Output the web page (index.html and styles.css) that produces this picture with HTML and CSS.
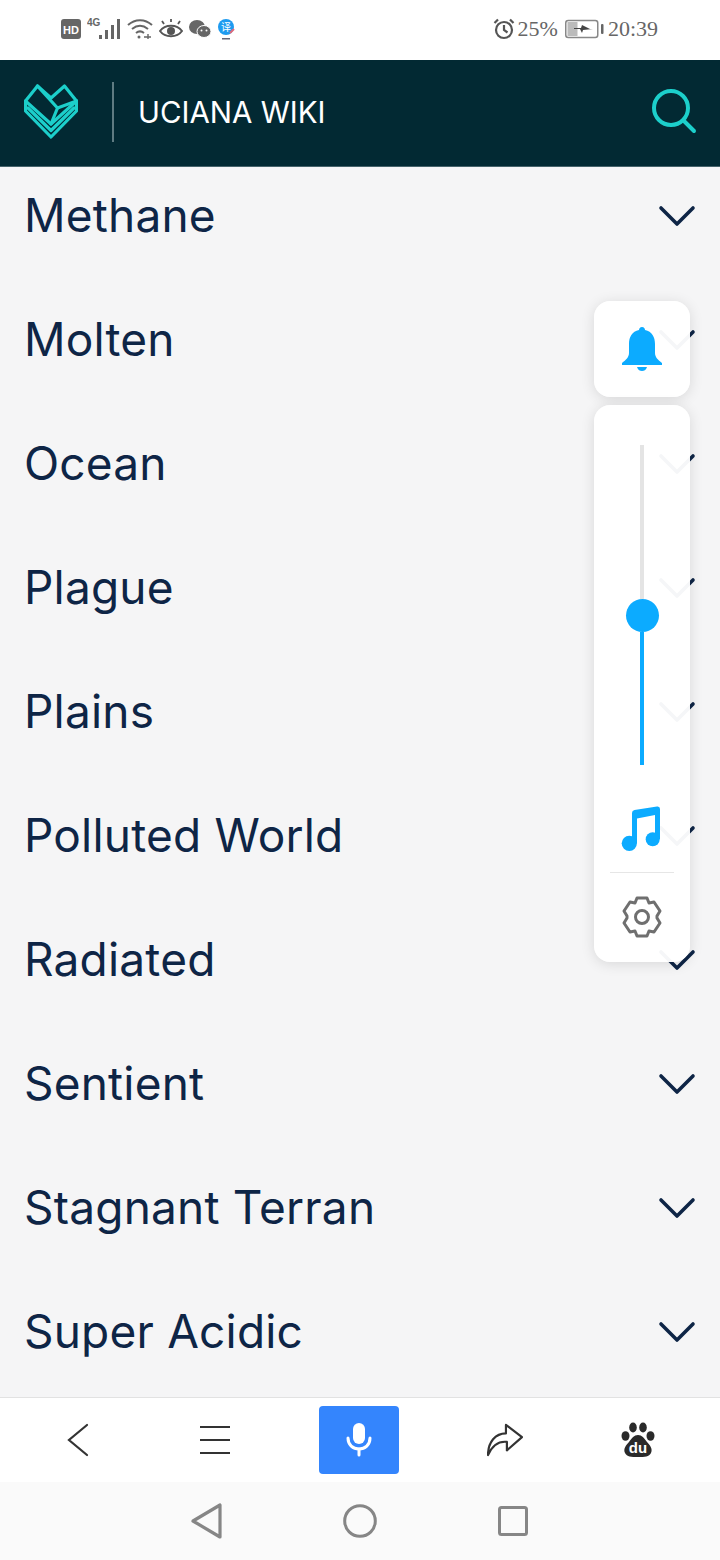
FILE: index.html
```html
<!DOCTYPE html>
<html lang="en">
<head>
<meta charset="utf-8">
<title>Uciana Wiki</title>
<link rel="stylesheet" href="styles.css">
</head>
<body>
<div class="phone">
  <div class="status">
    <div class="status-left">
      <svg class="st-icon" width="20" height="20" viewBox="0 0 20 20"><rect width="20" height="20" rx="3" fill="#666"/><text x="10" y="14.500" class="hd">HD</text></svg>
      <svg class="st-icon" width="34" height="24" viewBox="0 0 34 24"><text x="0" y="9" class="g4">4G</text><g fill="#666"><rect x="12" y="18" width="3" height="4"/><rect x="18" y="13" width="3" height="9"/><rect x="24" y="8" width="3" height="14"/><rect x="30" y="2" width="3" height="20"/></g></svg>
      <svg class="st-icon" width="26" height="22" viewBox="0 0 26 22" fill="none" stroke="#666" stroke-width="2"><path d="M1 7c7-6.500 17-6.500 24 0"/><path d="M5 11c5-4 11-4 16 0"/><path d="M9 15c2.500-2 5.500-2 8 0"/><circle cx="12" cy="19" r="1.500" fill="#666" stroke="none"/><path d="M17 19h7M21 16v5" stroke-width="1.400"/></svg>
      <svg class="st-icon" width="24" height="22" viewBox="0 0 24 22" fill="none" stroke="#555" stroke-width="2"><path d="M1 13c5-7 17-7 22 0-5 7-17 7-22 0z"/><circle cx="12" cy="13" r="4" fill="#555" stroke="none"/><path d="M5 6 3 3M12 4V1M19 6l2-3" stroke-width="1.800"/></svg>
      <svg class="st-icon" width="22" height="20" viewBox="0 0 22 20"><ellipse cx="8" cy="8" rx="8" ry="7" fill="#666"/><ellipse cx="15" cy="12.500" rx="7" ry="6" fill="#666" stroke="#fff"/><circle cx="12.500" cy="11.500" r="1" fill="#fff"/><circle cx="17.500" cy="11.500" r="1" fill="#fff"/></svg>
      <svg class="st-icon" width="18" height="22" viewBox="0 0 18 22"><circle cx="9" cy="9" r="8" fill="#1e9bf0"/><path d="M13 15l4-4" stroke="#e06a7a" stroke-width="2"/><rect x="5" y="20" width="8" height="1.500" fill="#667"/><text x="9" y="12.500" class="yi">译</text></svg>
    </div>
    <div class="status-right">
      <svg class="alarm" width="22" height="22" viewBox="0 0 22 22" fill="none" stroke="#555" stroke-width="2.200"><circle cx="11" cy="12" r="8"/><path d="M11 7v5l3.500 2.500"/><path d="M1.500 5 5 1.500M20.500 5 17 1.500"/></svg>
      <span class="st-text">25%</span>
      <svg class="battery" width="39" height="20" viewBox="0 0 39 20"><rect x="0.750" y="1.500" width="32" height="17" rx="2.500" fill="none" stroke="#888" stroke-width="1.500"/><rect x="2.500" y="3" width="10" height="14" fill="#bbb"/><path d="M9 9h7l1-3 8 4h3l-10 1-1 3-2-4H9z" fill="#444"/><rect x="36" y="5" width="2.500" height="10" rx="1" fill="#666"/></svg>
      <span class="st-text">20:39</span>
    </div>
  </div>

  <header class="header">
    <svg class="logo" width="54" height="56" viewBox="0 0 54 56" fill="none" stroke="#1ccfcb" stroke-width="3.200" stroke-linejoin="round" stroke-linecap="round"><path d="M1.500 17 13.500 2 27 14 40.500 2 52.500 17v10L27 53 1.500 27z"/><path d="M1.500 17 27 40 52.500 17"/><path d="M13.500 2l20 22L27 40"/><path d="M33.500 24l19-7"/><path d="M4 24l23 22.500L50 24"/></svg>
    <span class="divider"></span>
    <span class="brand">UCIANA WIKI</span>
    <svg class="search" width="46" height="46" viewBox="0 0 46 46" fill="none" stroke="#1ccfcb" stroke-width="4" stroke-linecap="round"><circle cx="20" cy="19" r="17"/><path d="M33 32l10 10"/></svg>
  </header>

  <main class="list">
    <div class="row"><span class="label">Methane</span><svg class="chev" viewBox="0 0 38 22"><path d="M3 3l16 16L35 3"/></svg></div>
    <div class="row"><span class="label">Molten</span><svg class="chev" viewBox="0 0 38 22"><path d="M3 3l16 16L35 3"/></svg></div>
    <div class="row"><span class="label">Ocean</span><svg class="chev" viewBox="0 0 38 22"><path d="M3 3l16 16L35 3"/></svg></div>
    <div class="row"><span class="label">Plague</span><svg class="chev" viewBox="0 0 38 22"><path d="M3 3l16 16L35 3"/></svg></div>
    <div class="row"><span class="label">Plains</span><svg class="chev" viewBox="0 0 38 22"><path d="M3 3l16 16L35 3"/></svg></div>
    <div class="row"><span class="label">Polluted World</span><svg class="chev" viewBox="0 0 38 22"><path d="M3 3l16 16L35 3"/></svg></div>
    <div class="row"><span class="label">Radiated</span><svg class="chev" viewBox="0 0 38 22"><path d="M3 3l16 16L35 3"/></svg></div>
    <div class="row"><span class="label">Sentient</span><svg class="chev" viewBox="0 0 38 22"><path d="M3 3l16 16L35 3"/></svg></div>
    <div class="row"><span class="label">Stagnant Terran</span><svg class="chev" viewBox="0 0 38 22"><path d="M3 3l16 16L35 3"/></svg></div>
    <div class="row"><span class="label">Super Acidic</span><svg class="chev" viewBox="0 0 38 22"><path d="M3 3l16 16L35 3"/></svg></div>
  </main>

  <aside class="float">
    <div class="card bell-card">
      <svg width="40" height="46" viewBox="0 0 40 46" fill="#0cabff"><path d="M20 0c2 0 3 1.500 3 3 7 1.500 10 7 10 14v9c0 4 3 7 7 10v2H0v-2c4-3 7-6 7-10v-9C7 10 10 4.500 17 3c0-1.500 1-3 3-3z"/><path d="M15 40h10c-1 3-3 4-5 4s-4-1-5-4z"/></svg>
    </div>
    <div class="card slider-card">
      <div class="track">
        <div class="track-off"></div>
        <div class="thumb"></div>
        <div class="track-on"></div>
      </div>
      <svg class="music" width="44" height="48" viewBox="0 0 44 48" fill="#0cabff"><path d="M12 8q0-2.500 2.500-3L37 1.500q3-.5 3 2.500v30h-5V10l-18 3.500V38h-5z"/><circle cx="9.300" cy="38.300" r="7.600"/><circle cx="32.700" cy="34.300" r="7"/></svg>
      <div class="sep"></div>
      <svg class="gear" width="40" height="42" viewBox="0 0 40 42" fill="none" stroke="#6f6f6f" stroke-width="3" stroke-linejoin="round"><path d="M15 2h10l2 5 5-1 6 9-3 5v2l3 5-6 9-5-1-2 5H15l-2-5-5 1-6-9 3-5v-2l-3-5 6-9 5 1z"/><circle cx="20" cy="21" r="6.500"/></svg>
    </div>
  </aside>

  <nav class="toolbar">
    <svg width="22" height="34" viewBox="0 0 22 34" fill="none" stroke="#333" stroke-width="2.200" stroke-linecap="round"><path d="M20 2 2 17l18 15"/></svg>
    <svg width="32" height="30" viewBox="0 0 32 30" stroke="#333" stroke-width="2.200"><path d="M1 2h30M1 15h30M1 28h30"/></svg>
    <div class="mic-btn">
      <svg width="26" height="34" viewBox="0 0 26 34" fill="none"><rect x="7" y="0" width="12" height="21" rx="6" fill="#fff"/><path d="M2 15c0 7 5 11 11 11s11-4 11-11" stroke="#fff" stroke-width="3" stroke-linecap="round"/><path d="M13 26v6" stroke="#fff" stroke-width="3" stroke-linecap="round"/></svg>
    </div>
    <svg width="36" height="34" viewBox="0 0 38 36" fill="none" stroke="#333" stroke-width="2.300" stroke-linejoin="round"><path d="M1 34C1 20 9 11 20 11V2l17 13-16 14v-9C12 19 5 25 1 34z"/></svg>
    <svg width="34" height="36" viewBox="0 0 34 36"><g fill="#2a2a2a"><ellipse cx="4.500" cy="14" rx="4" ry="4.800"/><ellipse cx="12" cy="5.500" rx="3.800" ry="5"/><ellipse cx="22" cy="5.500" rx="3.800" ry="5"/><ellipse cx="29.500" cy="14" rx="4" ry="4.800"/><path d="M17 13c4 0 6 3 9 7 3 3 6 7 4 11-2 4-6 4-13 4s-11 0-13-4c-2-4 1-8 4-11 3-4 5-7 9-7z"/></g><text x="17" y="31" class="du">du</text></svg>
  </nav>

  <div class="sysnav">
    <svg width="32" height="36" viewBox="0 0 32 36" fill="none" stroke="#868686" stroke-width="3.200" stroke-linejoin="round"><path d="M29 2v32L2 18z"/></svg>
    <svg width="34" height="34" viewBox="0 0 34 34" fill="none" stroke="#868686" stroke-width="3"><circle cx="17" cy="17" r="15.300"/></svg>
    <svg class="sn-square" width="30" height="30" viewBox="0 0 30 30" fill="none" stroke="#868686" stroke-width="3"><rect x="1.500" y="1.500" width="27" height="27" rx="2"/></svg>
  </div>
</div>
</body>
</html>
```
FILE: styles.css
```css
* { box-sizing: border-box; }
html, body { margin: 0; padding: 0; }
body { background: #f5f5f6; font-family: "Inter", "Roboto", sans-serif; }

.phone {
  position: relative;
  width: 720px;
  height: 1560px;
  display: flex;
  flex-direction: column;
  overflow: hidden;
}

.status {
  height: 60px;
  flex: none;
  background: #fff;
  display: flex;
  align-items: center;
  justify-content: space-between;
  padding: 0 62px 2px 61px;
}
.status-left { display: flex; align-items: center; gap: 6px; }
.status-right { display: flex; align-items: center; }
.alarm { margin-right: 3px; }
.battery { margin: 0 4px 0 7px; }
.st-text { font-family: "Liberation Serif", serif; font-size: 22px; color: #666; }
.hd { font-family: "Liberation Sans", sans-serif; font-weight: 700; font-size: 11px; fill: #fff; text-anchor: middle; }
.g4 { font-family: "Liberation Sans", sans-serif; font-weight: 700; font-size: 10px; fill: #666; }
.yi { font-family: "Noto Sans CJK SC", sans-serif; font-size: 10px; fill: #fff; text-anchor: middle; }
.du { font-family: "Liberation Sans", sans-serif; font-weight: 700; font-size: 15px; fill: #fff; text-anchor: middle; }

.header {
  height: 107px;
  flex: none;
  background: #022933;
  display: flex;
  align-items: center;
  padding: 0 24px 2px;
  border-bottom: 1px solid #46636b;
}
.logo { flex: none; }
.divider { width: 2px; height: 60px; background: #5f7b82; margin: 0 24px 0 34px; flex: none; }
.brand { color: #fff; font-size: 29.500px; padding-bottom: 1px; flex: 1; white-space: nowrap; }
.search { flex: none; margin-right: -1px; }

.list {
  flex: 1;
  min-height: 0;
  overflow: hidden;
  background: #f5f5f6;
}
.row {
  height: 124px;
  display: flex;
  align-items: center;
  justify-content: space-between;
  padding: 0 24px;
  color: #0e2546;
  font-size: 46px;
  letter-spacing: 0.200px;
  white-space: nowrap;
}
.row:first-child { margin-top: -13px; }
.label { padding-bottom: 2px; }
.chev { width: 38px; height: 22px; fill: none; stroke: #0e2546; stroke-width: 3.600; stroke-linecap: round; stroke-linejoin: round; }

.float {
  position: absolute;
  left: 594px;
  top: 301px;
  width: 96px;
  display: flex;
  flex-direction: column;
  gap: 8px;
}
.card {
  background: rgba(255, 255, 255, 0.96);
  border-radius: 16px;
  box-shadow: 0 2px 14px rgba(0, 0, 0, 0.12);
  display: flex;
  flex-direction: column;
  align-items: center;
}
.bell-card { height: 96px; justify-content: center; padding-top: 2px; }
.slider-card { height: 557px; padding-top: 40px; }

.track {
  width: 4px;
  height: 320px;
  display: flex;
  flex-direction: column;
  align-items: center;
  flex: none;
}
.track-off { height: 154px; width: 4px; background: #e4e4e4; flex: none; }
.thumb { width: 33px; height: 33px; border-radius: 50%; background: #0cabff; flex: none; }
.track-on { flex: 1; width: 4px; background: #0cabff; }
.music { margin-top: 40px; flex: none; }
.sep { width: 64px; height: 1px; background: #e6e6e6; margin-top: 19px; flex: none; }
.gear { margin-top: 23px; flex: none; }

.toolbar {
  height: 85px;
  flex: none;
  background: #fff;
  border-top: 1px solid #e2e2e2;
  display: grid;
  grid-template-columns: 156px 118px 170px 122px 144px;
  align-items: center;
  justify-items: center;
}
.mic-btn {
  width: 80px;
  height: 68px;
  background: #3485fd;
  border-radius: 4px;
  display: flex;
  align-items: center;
  justify-content: center;
}

.sysnav {
  height: 78px;
  flex: none;
  background: #fafafa;
  display: flex;
  align-items: center;
  justify-content: center;
  gap: 120px;
  padding-right: 1px;
}
.sn-square { margin-left: 1px; }
```
